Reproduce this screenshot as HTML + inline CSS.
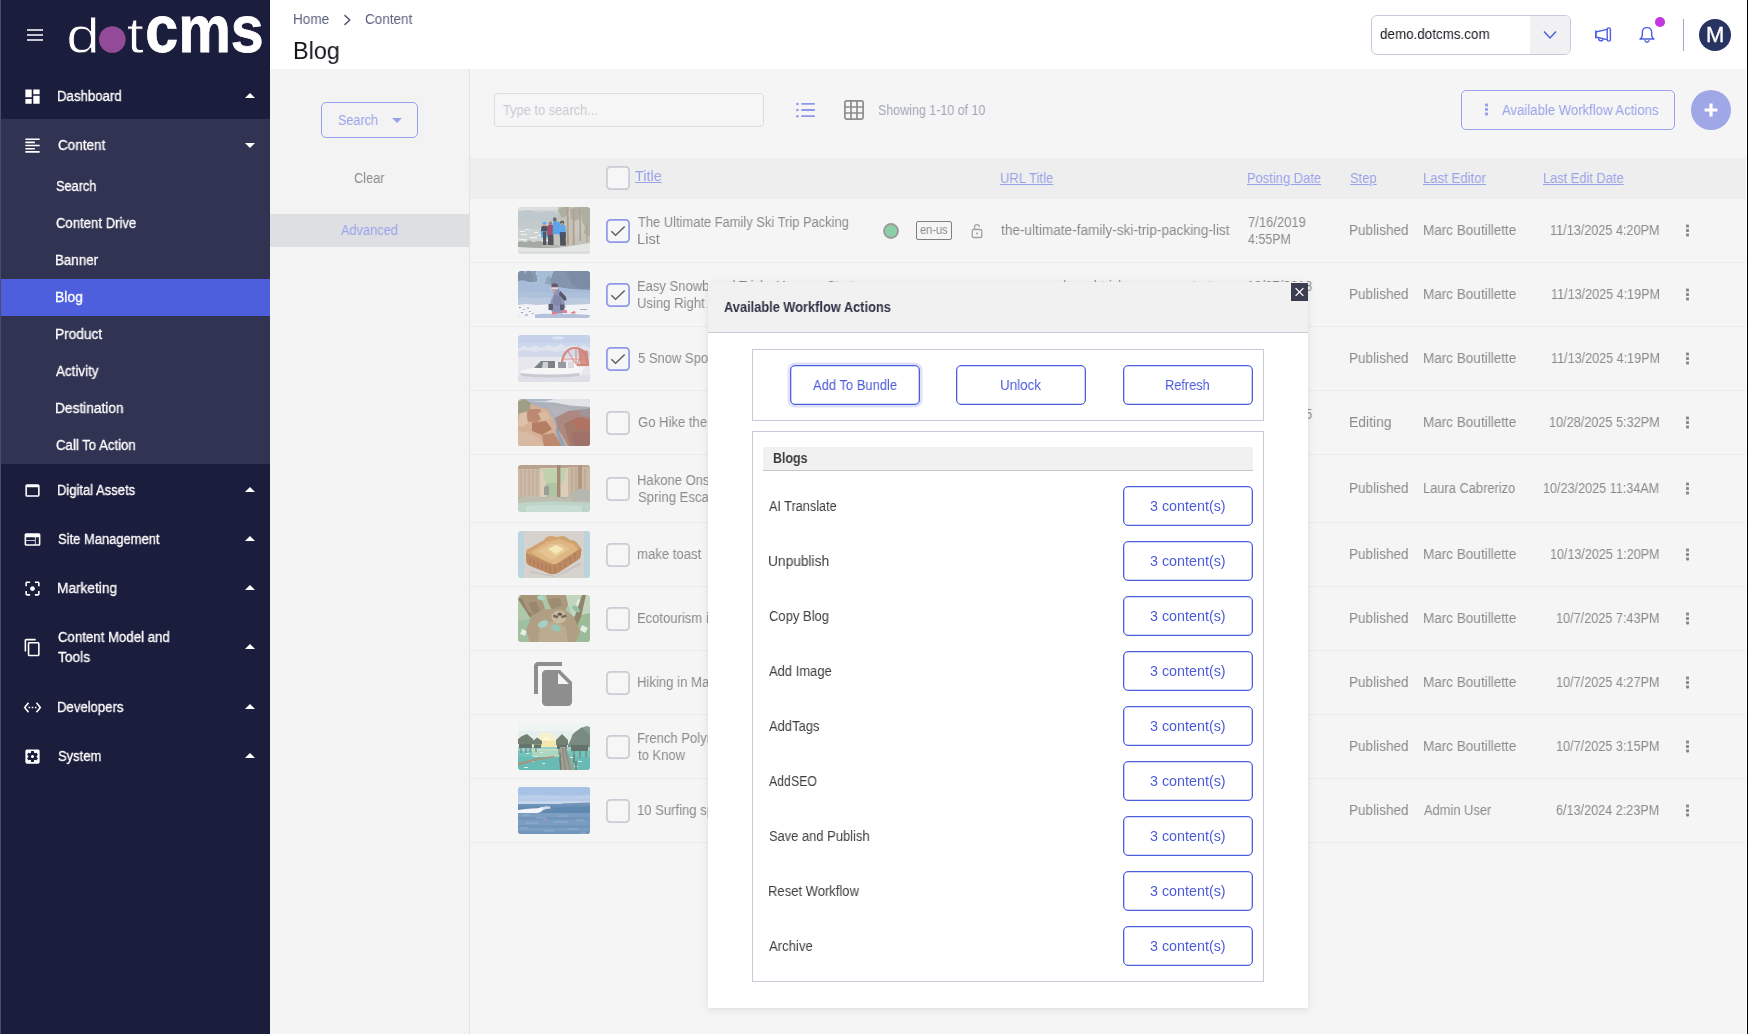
<!DOCTYPE html>
<html lang="en"><head><meta charset="utf-8"><title>dotCMS - Blog</title>
<style>
html,body{margin:0;padding:0;overflow:hidden}
body{position:relative;width:1748px;height:1034px;overflow:hidden;background:#fff;font-family:"Liberation Sans",sans-serif;font-size:14px}
.t{will-change:transform;position:absolute;white-space:nowrap;line-height:20px;transform-origin:0 50%;font-family:"Liberation Sans",sans-serif;display:block}
.ic{position:absolute;display:block;overflow:visible}
.side{position:absolute;left:0;top:0;width:270px;height:1034px;background:#1b1d3c;z-index:3}
.side .edge{position:absolute;left:0;top:0;width:1px;height:1034px;background:#4a4c68;z-index:2}
.side .sec{position:absolute;left:0;width:270px;background:#313352}
.side .act{position:absolute;left:0;width:270px;background:#4e5fde}
.top{position:absolute;left:0;top:0;width:1746px;height:69px;background:#fff;z-index:2}
.sel{position:absolute;left:1371px;top:15px;width:198px;height:38px;border:1px solid #c6c9dd;border-radius:6px;background:#fff;overflow:hidden}
.sel .trg{position:absolute;right:0;top:0;width:40px;height:38px;background:#f1f1f3}
.dot{position:absolute;left:1655px;top:17px;width:10px;height:10px;border-radius:50%;background:#c336e0}
.vdiv{position:absolute;left:1683px;top:19px;width:1px;height:32px;background:#a4a8bd}
.ava{position:absolute;left:1699px;top:19px;width:32px;height:32px;border-radius:50%;background:#273360}
.frame{position:absolute;left:0;top:0;width:1746px;height:1034px;background:#f5f5f5;z-index:1}
.panel{position:absolute;left:270px;top:69px;width:199px;height:965px;background:#f3f3f3;border-right:1px solid #e3e3e6}
.panel>*{margin-left:-270px;margin-top:-69px}
.sbtn{position:absolute;left:321px;top:102px;width:95px;height:34px;border:1px solid #99a2ec;border-radius:5px}
.adv{position:absolute;left:270px;top:214px;width:199px;height:33px;background:#dedfe3}
.inp{position:absolute;left:494px;top:93px;width:268px;height:32px;border:1px solid #dcdde4;border-radius:4px;background:#f6f6f6}
.awa{position:absolute;left:1461px;top:90px;width:212px;height:38px;border:1px solid #99a2ec;border-radius:5px}
.plus{position:absolute;left:1691px;top:90px;width:40px;height:40px;border-radius:50%;background:#9fa7e6}
.thead{position:absolute;left:470px;top:158px;width:1276px;height:41px;background:#eeeeee}
.row{position:absolute;left:470px;width:1276px;box-sizing:border-box;border-bottom:1px solid #ebebeb}
.lang{position:absolute;left:916px;width:34px;height:17px;border:1px solid #7e7e84;border-radius:2px}
.dlg{position:absolute;left:0;top:0;z-index:5}
.dshadow{position:absolute;left:708px;top:282px;width:600px;height:726px;box-shadow:0 2px 9px rgba(0,0,0,.09),0 0 2px rgba(0,0,0,.05)}
.dbody{position:absolute;left:708px;top:282px;width:600px;height:726px;background:#fff}
.dtitle{position:absolute;left:708px;top:282px;width:600px;height:50px;background:#f1f1f1;border-bottom:1px solid #c7c9d6}
.dclose{position:absolute;left:1291px;top:283px;width:17px;height:18px;background:#3b3e50}
.dclose svg{display:block}
.fs{position:absolute;border:1px solid #c9cbd9}
.btn{position:absolute;width:128px;height:38px;border:1px solid #4c60de;border-radius:5px;background:#fff;box-shadow:inset 0 0 0 .3px #4c60de}
.btn.foc{box-shadow:inset 0 0 0 .3px #4c60de,0 0 0 2.5px #dfe2f9}
.grp{position:absolute;left:763px;top:447px;width:490px;height:23px;background:#f1f1f1;border-bottom:1px solid #c3c5cf}
.redge{position:absolute;left:1747px;top:0;width:1px;height:1034px;background:#000;z-index:9}
.nv{-webkit-text-stroke:.3px #fff}

</style></head>
<body>
<nav class="side">
<div class="edge"></div>
<svg class="ic" style="left:27px;top:28px" width="16" height="14" viewBox="0 0 16 14"><path d="M0 2h16M0 7h16M0 12h16" stroke="#fff" stroke-width="1.4" fill="none"/></svg>
<svg class="ic logo" style="left:60px;top:8px" width="210" height="56" viewBox="60 8 210 56">
<text x="66.3" y="52.7" font-size="49.5" fill="#fff" stroke="#1b1d3c" stroke-width="0.9" textLength="33.6" lengthAdjust="spacingAndGlyphs">d</text>
<circle cx="112.3" cy="39.5" r="13.3" fill="#944b97"/>
<text x="126.6" y="52.7" font-size="49.5" fill="#fff" stroke="#1b1d3c" stroke-width="0.9" textLength="17.5" lengthAdjust="spacingAndGlyphs">t</text>
<text x="145.3" y="52.3" font-size="67" font-weight="700" fill="#fff" stroke="#fff" stroke-width="0.8" textLength="118.5" lengthAdjust="spacingAndGlyphs">cms</text>
</svg>
<div class="sec" style="top:119px;height:345px"></div>
<div class="act" style="top:279px;height:37px"></div>
<svg class="ic" style="left:23.10px;top:86.90px" width="19" height="19" viewBox="0 0 24 24"><path fill="#fff" d="M3 13h8V3H3v10zm0 8h8v-6H3v6zm10 0h8V11h-8v10zm0-18v6h8V3h-8z"/></svg>
<span class="t nv" style="left:57.32px;top:85.70px;font-size:14px;color:#fff;transform:scaleX(0.9437);">Dashboard</span>
<svg class="ic" style="left:245px;top:92.5px" width="10" height="5" viewBox="0 0 10 5"><path d="M0 5L5 0L10 5z" fill="#fff"/></svg>
<svg class="ic" style="left:23.10px;top:135.90px" width="19" height="19" viewBox="0 0 24 24"><path fill="#fff" d="M15 15H3v2h12v-2zm0-8H3v2h12V7zM3 13h18v-2H3v2zm0 8h18v-2H3v2zM3 3v2h18V3H3z"/></svg>
<span class="t nv" style="left:57.71px;top:134.70px;font-size:14px;color:#fff;transform:scaleX(0.9643);">Content</span>
<svg class="ic" style="left:245px;top:142.5px" width="10" height="5" viewBox="0 0 10 5"><path d="M0 0L5 5L10 0z" fill="#fff"/></svg>
<svg class="ic" style="left:23.10px;top:480.90px" width="19" height="19" viewBox="0 0 24 24"><path fill="#fff" d="M19 4H5c-1.11 0-2 .9-2 2v12c0 1.1.89 2 2 2h14c1.1 0 2-.9 2-2V6c0-1.1-.89-2-2-2zm0 14H5V8h14v10z"/></svg>
<span class="t nv" style="left:57.33px;top:479.70px;font-size:14px;color:#fff;transform:scaleX(0.9298);">Digital Assets</span>
<svg class="ic" style="left:245px;top:486.5px" width="10" height="5" viewBox="0 0 10 5"><path d="M0 5L5 0L10 5z" fill="#fff"/></svg>
<svg class="ic" style="left:23.10px;top:529.90px" width="19" height="19" viewBox="0 0 24 24"><path fill="#fff" d="M20 4H4c-1.1 0-1.99.9-1.99 2L2 18c0 1.1.9 2 2 2h16c1.1 0 2-.9 2-2V6c0-1.1-.9-2-2-2zm-5 14H4v-4h11v4zm0-5H4V9h11v4zm5 5h-4V9h4v9z"/></svg>
<span class="t nv" style="left:57.81px;top:528.70px;font-size:14px;color:#fff;transform:scaleX(0.9257);">Site Management</span>
<svg class="ic" style="left:245px;top:535.5px" width="10" height="5" viewBox="0 0 10 5"><path d="M0 5L5 0L10 5z" fill="#fff"/></svg>
<svg class="ic" style="left:23.10px;top:578.90px" width="19" height="19" viewBox="0 0 24 24"><path fill="#fff" d="M5 15H3v4c0 1.1.9 2 2 2h4v-2H5v-4zM5 5h4V3H5c-1.1 0-2 .9-2 2v4h2V5zm14-2h-4v2h4v4h2V5c0-1.1-.9-2-2-2zm0 16h-4v2h4c1.1 0 2-.9 2-2v-4h-2v4zM12 9c-1.66 0-3 1.34-3 3s1.34 3 3 3 3-1.34 3-3-1.34-3-3-3z"/></svg>
<span class="t nv" style="left:57.28px;top:577.70px;font-size:14px;color:#fff;transform:scaleX(0.9761);">Marketing</span>
<svg class="ic" style="left:245px;top:584.5px" width="10" height="5" viewBox="0 0 10 5"><path d="M0 5L5 0L10 5z" fill="#fff"/></svg>
<svg class="ic" style="left:23.10px;top:638.10px" width="19" height="19" viewBox="0 0 24 24"><path fill="#fff" d="M16 1H4c-1.1 0-2 .9-2 2v14h2V3h12V1zm3 4H8c-1.1 0-2 .9-2 2v14c0 1.1.9 2 2 2h11c1.1 0 2-.9 2-2V7c0-1.1-.9-2-2-2zm0 16H8V7h11v14z"/></svg>
<span class="t nv" style="left:57.73px;top:626.60px;font-size:14px;color:#fff;transform:scaleX(0.9444);">Content Model and</span>
<span class="t nv" style="left:58.09px;top:647.30px;font-size:14px;color:#fff;transform:scaleX(0.9823);">Tools</span>
<svg class="ic" style="left:245px;top:643.5px" width="10" height="5" viewBox="0 0 10 5"><path d="M0 5L5 0L10 5z" fill="#fff"/></svg>
<svg class="ic" style="left:23.10px;top:697.90px" width="19" height="19" viewBox="0 0 24 24"><path fill="#fff" d="M7.77 6.76L6.23 5.48.82 12l5.41 6.52 1.54-1.28L3.42 12l4.35-5.24zM7 13h2v-2H7v2zm10-2h-2v2h2v-2zm-6 2h2v-2h-2v2zm6.77-7.52l-1.54 1.28L20.58 12l-4.35 5.24 1.54 1.28L23.18 12l-5.41-6.52z"/></svg>
<span class="t nv" style="left:57.32px;top:696.70px;font-size:14px;color:#fff;transform:scaleX(0.9384);">Developers</span>
<svg class="ic" style="left:245px;top:703.5px" width="10" height="5" viewBox="0 0 10 5"><path d="M0 5L5 0L10 5z" fill="#fff"/></svg>
<svg class="ic" style="left:23.10px;top:746.90px" width="19" height="19" viewBox="0 0 24 24"><path fill="#fff" d="M12 10c-1.1 0-2 .9-2 2s.9 2 2 2 2-.9 2-2-.9-2-2-2zm7-7H5c-1.11 0-2 .9-2 2v14c0 1.1.89 2 2 2h14c1.11 0 2-.9 2-2V5c0-1.1-.89-2-2-2zm-1.75 9c0 .23-.02.46-.05.68l1.48 1.16c.13.11.17.3.08.45l-1.4 2.42c-.09.15-.27.21-.43.15l-1.74-.7c-.36.28-.76.51-1.18.69l-.26 1.85c-.03.17-.18.3-.35.3h-2.8c-.17 0-.32-.13-.35-.29l-.26-1.85c-.43-.18-.82-.41-1.18-.69l-1.74.7c-.16.06-.34 0-.43-.15l-1.4-2.42c-.09-.15-.05-.34.08-.45l1.48-1.16c-.03-.23-.05-.46-.05-.69 0-.23.02-.46.05-.68l-1.48-1.16c-.13-.11-.17-.3-.08-.45l1.4-2.42c.09-.15.27-.21.43-.15l1.74.7c.36-.28.76-.51 1.18-.69l.26-1.85c.03-.17.18-.3.35-.3h2.8c.17 0 .32.13.35.29l.26 1.85c.43.18.82.41 1.18.69l1.74-.7c.16-.06.34 0 .43.15l1.4 2.42c.09.15.05.34-.08.45l-1.48 1.16c.03.23.05.46.05.69z"/></svg>
<span class="t nv" style="left:57.81px;top:745.70px;font-size:14px;color:#fff;transform:scaleX(0.9287);">System</span>
<svg class="ic" style="left:245px;top:752.5px" width="10" height="5" viewBox="0 0 10 5"><path d="M0 5L5 0L10 5z" fill="#fff"/></svg>
<span class="t nv" style="left:55.62px;top:175.90px;font-size:14px;color:#fff;transform:scaleX(0.9109);">Search</span>
<span class="t nv" style="left:55.53px;top:212.90px;font-size:14px;color:#fff;transform:scaleX(0.9376);">Content Drive</span>
<span class="t nv" style="left:55.10px;top:249.90px;font-size:14px;color:#fff;transform:scaleX(0.9539);">Banner</span>
<span class="t nv" style="left:55.06px;top:286.90px;font-size:14px;color:#fff;transform:scaleX(0.9915);">Blog</span>
<span class="t nv" style="left:55.08px;top:323.90px;font-size:14px;color:#fff;transform:scaleX(0.9788);">Product</span>
<span class="t nv" style="left:56.17px;top:360.90px;font-size:14px;color:#fff;transform:scaleX(0.9597);">Activity</span>
<span class="t nv" style="left:55.08px;top:397.90px;font-size:14px;color:#fff;transform:scaleX(0.9782);">Destination</span>
<span class="t nv" style="left:55.53px;top:434.90px;font-size:14px;color:#fff;transform:scaleX(0.9427);">Call To Action</span>
</nav>
<header class="top">
<span class="t" style="left:293.19px;top:8.80px;font-size:14px;color:#5a5f7e;transform:scaleX(0.9698);">Home</span>
<svg class="ic" style="left:343px;top:14px" width="9" height="12" viewBox="0 0 9 12"><path d="M1.5 1.2L6.7 6L1.5 10.8" stroke="#5a5f7e" stroke-width="1.6" fill="none"/></svg>
<span class="t" style="left:364.61px;top:8.80px;font-size:14px;color:#5a5f7e;transform:scaleX(0.9643);">Content</span>
<span class="t" style="left:293.49px;top:35.80px;font-size:23.5px;color:#14151a;transform:scaleX(0.9932);line-height:30px;">Blog</span>
<div class="sel"><div class="trg"></div></div>
<span class="t" style="left:1379.64px;top:23.50px;font-size:14.5px;color:#17181d;transform:scaleX(0.9256);">demo.dotcms.com</span>
<svg class="ic" style="left:1543px;top:30px" width="14" height="10" viewBox="0 0 14 10"><path d="M1 1.6L7 8L13 1.6" stroke="#4c5fe0" stroke-width="1.5" fill="none"/></svg>
<svg class="ic" style="left:1594px;top:26px" width="18" height="18" viewBox="0 0 18 18" fill="none" stroke="#4c5fe0" stroke-width="1.4" stroke-linejoin="round" stroke-linecap="round">
<rect x="13.2" y="1.9" width="3.2" height="13.2" rx="1.4"/><path d="M13.2 3.4L1.8 6v5l11.4 2.6"/><path d="M1.8 5v7"/><path d="M4.6 12.2c0 1.6 .9 2.6 2.2 2.6s2.1-.8 2.1-1.6"/></svg>
<svg class="ic" style="left:1638px;top:26px" width="18" height="18" viewBox="0 0 18 18" fill="none" stroke="#4c5fe0" stroke-width="1.4" stroke-linejoin="round" stroke-linecap="round">
<path d="M9 1.6c-2.9 0-4.7 2.1-4.7 5v2.8c0 1.3-.9 2.5-2.3 3.6h14c-1.4-1.1-2.3-2.3-2.3-3.6V6.6c0-2.9-1.8-5-4.7-5z"/><path d="M7 14.6c.3 1 1 1.6 2 1.6s1.7-.6 2-1.6"/></svg>
<div class="dot"></div><div class="vdiv"></div><div class="ava"></div>
<span class="t" style="left:1705.90px;top:21.20px;font-size:21.5px;color:#fff;transform:scaleX(1.0220);line-height:28px;-webkit-text-stroke:.35px #fff;">M</span>
</header>
<section class="frame">
<aside class="panel">
<div class="sbtn"></div>
<span class="t" style="left:337.63px;top:109.50px;font-size:14px;color:#9aa2ea;transform:scaleX(0.9015);">Search</span>
<svg class="ic" style="left:392px;top:118px" width="10" height="5" viewBox="0 0 10 5"><path d="M0 0L5 5L10 0z" fill="#9aa2ea"/></svg>
<span class="t" style="left:354.15px;top:167.50px;font-size:14px;color:#8b8b8b;transform:scaleX(0.9135);">Clear</span>
<div class="adv"></div>
<span class="t" style="left:341.28px;top:219.50px;font-size:14px;color:#9aa2ea;transform:scaleX(0.9129);">Advanced</span>
</aside>
<main class="list">
<div class="inp"></div>
<span class="t" style="left:503.11px;top:99.90px;font-size:14px;color:#c9cad2;transform:scaleX(0.9175);">Type to search...</span>
<svg class="ic" style="left:796px;top:102px" width="20" height="16" viewBox="0 0 20 16"><g fill="#8e97ea"><circle cx="1.400" cy="1.900" r="1.250"/><circle cx="1.400" cy="8" r="1.250"/><circle cx="1.400" cy="14.200" r="1.250"/><rect x="5.2" y="1" width="13.8" height="1.800" rx=".7"/><rect x="5.2" y="7.100" width="13.8" height="1.800" rx=".7"/><rect x="5.2" y="13.300" width="13.8" height="1.800" rx=".7"/></g></svg>
<svg class="ic" style="left:844px;top:100px" width="20" height="20" viewBox="0 0 20 20"><g fill="none" stroke="#8c8c8c" stroke-width="1.7"><rect x="0.9" y="0.9" width="18.2" height="18.2" rx="1.6"/><path d="M7 1v18M13 1v18M1 7h18M1 13h18"/></g></svg>
<span class="t" style="left:878.03px;top:100.00px;font-size:14px;color:#a3a6b8;transform:scaleX(0.8907);">Showing 1-10 of 10</span>
<div class="awa"></div>
<svg class="ic" style="left:1483.6px;top:103.2px" width="5" height="13" viewBox="0 0 5 13"><g fill="#98a1ea"><rect x="1" y="0.6" width="3" height="3" rx=".7"/><rect x="1" y="5" width="3" height="3" rx=".7"/><rect x="1" y="9.4" width="3" height="3" rx=".7"/></g></svg>
<span class="t" style="left:1501.97px;top:99.50px;font-size:14px;color:#9aa2ea;transform:scaleX(0.9383);">Available Workflow Actions</span>
<div class="plus"><svg width="40" height="40" viewBox="0 0 40 40"><path d="M20 13.6v12.8M13.6 20h12.8" stroke="#fff" stroke-width="3.2"/></svg></div>
<div class="thead"></div>
<svg class="ic cb" style="left:606px;top:166px" width="24" height="24" viewBox="0 0 24 24"><rect x=".9" y=".9" width="22.2" height="22.2" rx="3.600" fill="#f6f6f6" stroke="#cacbd4" stroke-width="1.7"/></svg>
<span class="t" style="left:635.48px;top:165.80px;font-size:14px;color:#9aa2ea;text-decoration:underline;transform:scaleX(1.0283);">Title</span>
<span class="t" style="left:1000.29px;top:167.50px;font-size:14px;color:#9aa2ea;text-decoration:underline;transform:scaleX(0.9340);">URL Title</span>
<span class="t" style="left:1247.24px;top:167.50px;font-size:14px;color:#9aa2ea;text-decoration:underline;transform:scaleX(0.9249);">Posting Date</span>
<span class="t" style="left:1349.91px;top:167.50px;font-size:14px;color:#9aa2ea;text-decoration:underline;transform:scaleX(0.9247);">Step</span>
<span class="t" style="left:1423.22px;top:167.50px;font-size:14px;color:#9aa2ea;text-decoration:underline;transform:scaleX(0.9413);">Last Editor</span>
<span class="t" style="left:1543.45px;top:167.50px;font-size:14px;color:#9aa2ea;text-decoration:underline;transform:scaleX(0.9168);">Last Edit Date</span>
<div class="row" style="top:199px;height:64px"></div>
<svg class="ic cb" style="left:606px;top:219.0px" width="24" height="24" viewBox="0 0 24 24"><rect x=".9" y=".9" width="22.2" height="22.2" rx="3.600" fill="#f6f6f6" stroke="#8f98e8" stroke-width="1.7"/></svg>
<svg class="ic" style="left:606px;top:219.0px" width="24" height="24" viewBox="0 0 24 24"><path d="M5.300 12.300L9.600 16.300L18.700 7.500" stroke="#5e5e5e" stroke-width="1.4" fill="none"/></svg>
<span class="t" style="left:638.01px;top:211.90px;font-size:14px;color:#8b8b8b;transform:scaleX(0.9217);">The Ultimate Family Ski Trip Packing</span>
<span class="t" style="left:637.10px;top:228.60px;font-size:14px;color:#8b8b8b;transform:scaleX(1.0470);">List</span>
<span class="t" style="left:1001.09px;top:220.00px;font-size:14px;color:#8b8b8b;transform:scaleX(0.9726);">the-ultimate-family-ski-trip-packing-list</span>
<span class="t" style="left:1247.53px;top:211.80px;font-size:14px;color:#8b8b8b;transform:scaleX(0.9277);">7/16/2019</span>
<span class="t" style="left:1247.91px;top:228.60px;font-size:14px;color:#8b8b8b;transform:scaleX(0.8871);">4:55PM</span>
<span class="t" style="left:1349.39px;top:220.00px;font-size:14px;color:#8b8b8b;transform:scaleX(0.9673);">Published</span>
<span class="t" style="left:1423.39px;top:220.00px;font-size:14px;color:#8b8b8b;transform:scaleX(0.9661);">Marc Boutillette</span>
<span class="t" style="left:1550.04px;top:220.00px;font-size:14px;color:#8b8b8b;transform:scaleX(0.9037);">11/13/2025 4:20PM</span>
<svg class="ic" style="left:1684.6px;top:223.8px" width="5" height="13" viewBox="0 0 5 13"><g fill="#8a8a8a"><rect x="1" y="0.6" width="3" height="3" rx=".7"/><rect x="1" y="5" width="3" height="3" rx=".7"/><rect x="1" y="9.4" width="3" height="3" rx=".7"/></g></svg>
<svg class="ic" style="left:883px;top:223.0px" width="16" height="16" viewBox="0 0 16 16"><circle cx="8" cy="8" r="7" fill="#8acfa8" stroke="#9c9999" stroke-width="1.8"/></svg>
<div class="lang" style="top:221.0px"></div>
<span class="t" style="left:920.13px;top:219.50px;font-size:12.3px;color:#8a8a90;transform:scaleX(0.8993);">en-us</span>
<svg class="ic" style="left:970px;top:223.0px" width="14" height="16" viewBox="0 0 14 16"><g fill="none" stroke="#a2a2a2" stroke-width="1.300"><rect x="2.250" y="6.500" width="9.500" height="8" rx="1.200"/><path d="M4.500 6.500V4.300a2.500 2.500 0 0 1 5 -.300"/></g><circle cx="7" cy="10.500" r="1.050" fill="#a2a2a2"/></svg>
<div class="row" style="top:263px;height:64px"></div>
<svg class="ic cb" style="left:606px;top:283.0px" width="24" height="24" viewBox="0 0 24 24"><rect x=".9" y=".9" width="22.2" height="22.2" rx="3.600" fill="#f6f6f6" stroke="#8f98e8" stroke-width="1.7"/></svg>
<svg class="ic" style="left:606px;top:283.0px" width="24" height="24" viewBox="0 0 24 24"><path d="M5.300 12.300L9.600 16.300L18.700 7.500" stroke="#5e5e5e" stroke-width="1.4" fill="none"/></svg>
<span class="t" style="left:637.23px;top:275.90px;font-size:14px;color:#8b8b8b;transform:scaleX(0.9300);">Easy Snowboard Tricks You can Start</span>
<span class="t" style="left:637.29px;top:292.60px;font-size:14px;color:#8b8b8b;transform:scaleX(0.9345);">Using Right Away</span>
<span class="t" style="left:1000.75px;top:275.80px;font-size:14px;color:#8b8b8b;transform:scaleX(0.9299);">easy-snowboard-tricks-you-can-start-</span>
<span class="t" style="left:1000.45px;top:292.60px;font-size:14px;color:#8b8b8b;transform:scaleX(0.9335);">using-right-away</span>
<span class="t" style="left:1247.21px;top:275.80px;font-size:14px;color:#8b8b8b;transform:scaleX(0.9314);">12/27/2018</span>
<span class="t" style="left:1247.72px;top:292.60px;font-size:14px;color:#8b8b8b;transform:scaleX(0.8912);">3:12PM</span>
<span class="t" style="left:1349.39px;top:284.00px;font-size:14px;color:#8b8b8b;transform:scaleX(0.9673);">Published</span>
<span class="t" style="left:1423.39px;top:284.00px;font-size:14px;color:#8b8b8b;transform:scaleX(0.9661);">Marc Boutillette</span>
<span class="t" style="left:1550.54px;top:284.00px;font-size:14px;color:#8b8b8b;transform:scaleX(0.8995);">11/13/2025 4:19PM</span>
<svg class="ic" style="left:1684.6px;top:287.8px" width="5" height="13" viewBox="0 0 5 13"><g fill="#8a8a8a"><rect x="1" y="0.6" width="3" height="3" rx=".7"/><rect x="1" y="5" width="3" height="3" rx=".7"/><rect x="1" y="9.4" width="3" height="3" rx=".7"/></g></svg>
<svg class="ic" style="left:883px;top:287.0px" width="16" height="16" viewBox="0 0 16 16"><circle cx="8" cy="8" r="7" fill="#8acfa8" stroke="#9c9999" stroke-width="1.8"/></svg>
<div class="lang" style="top:285.0px"></div>
<span class="t" style="left:920.13px;top:283.50px;font-size:12.3px;color:#8a8a90;transform:scaleX(0.8993);">en-us</span>
<svg class="ic" style="left:970px;top:287.0px" width="14" height="16" viewBox="0 0 14 16"><g fill="none" stroke="#a2a2a2" stroke-width="1.300"><rect x="2.250" y="6.500" width="9.500" height="8" rx="1.200"/><path d="M4.500 6.500V4.300a2.500 2.500 0 0 1 5 -.300"/></g><circle cx="7" cy="10.500" r="1.050" fill="#a2a2a2"/></svg>
<div class="row" style="top:327px;height:64px"></div>
<svg class="ic cb" style="left:606px;top:347.0px" width="24" height="24" viewBox="0 0 24 24"><rect x=".9" y=".9" width="22.2" height="22.2" rx="3.600" fill="#f6f6f6" stroke="#8f98e8" stroke-width="1.7"/></svg>
<svg class="ic" style="left:606px;top:347.0px" width="24" height="24" viewBox="0 0 24 24"><path d="M5.300 12.300L9.600 16.300L18.700 7.500" stroke="#5e5e5e" stroke-width="1.4" fill="none"/></svg>
<span class="t" style="left:637.78px;top:347.70px;font-size:14px;color:#8b8b8b;transform:scaleX(0.9286);">5 Snow Sports to Try This Winter</span>
<span class="t" style="left:1000.78px;top:348.00px;font-size:14px;color:#8b8b8b;transform:scaleX(0.9288);">5-snow-sports-to-try-this-winter</span>
<span class="t" style="left:1247.20px;top:339.80px;font-size:14px;color:#8b8b8b;transform:scaleX(0.9330);">1/10/2019</span>
<span class="t" style="left:1247.57px;top:356.60px;font-size:14px;color:#8b8b8b;transform:scaleX(0.8945);">2:30PM</span>
<span class="t" style="left:1349.39px;top:348.00px;font-size:14px;color:#8b8b8b;transform:scaleX(0.9673);">Published</span>
<span class="t" style="left:1423.39px;top:348.00px;font-size:14px;color:#8b8b8b;transform:scaleX(0.9661);">Marc Boutillette</span>
<span class="t" style="left:1550.54px;top:348.00px;font-size:14px;color:#8b8b8b;transform:scaleX(0.8995);">11/13/2025 4:19PM</span>
<svg class="ic" style="left:1684.6px;top:351.8px" width="5" height="13" viewBox="0 0 5 13"><g fill="#8a8a8a"><rect x="1" y="0.6" width="3" height="3" rx=".7"/><rect x="1" y="5" width="3" height="3" rx=".7"/><rect x="1" y="9.4" width="3" height="3" rx=".7"/></g></svg>
<svg class="ic" style="left:883px;top:351.0px" width="16" height="16" viewBox="0 0 16 16"><circle cx="8" cy="8" r="7" fill="#8acfa8" stroke="#9c9999" stroke-width="1.8"/></svg>
<div class="lang" style="top:349.0px"></div>
<span class="t" style="left:920.13px;top:347.50px;font-size:12.3px;color:#8a8a90;transform:scaleX(0.8993);">en-us</span>
<svg class="ic" style="left:970px;top:351.0px" width="14" height="16" viewBox="0 0 14 16"><g fill="none" stroke="#a2a2a2" stroke-width="1.300"><rect x="2.250" y="6.500" width="9.500" height="8" rx="1.200"/><path d="M4.500 6.500V4.300a2.500 2.500 0 0 1 5 -.300"/></g><circle cx="7" cy="10.500" r="1.050" fill="#a2a2a2"/></svg>
<div class="row" style="top:391px;height:64px"></div>
<svg class="ic cb" style="left:606px;top:411.0px" width="24" height="24" viewBox="0 0 24 24"><rect x=".9" y=".9" width="22.2" height="22.2" rx="3.600" fill="#f6f6f6" stroke="#cacbd4" stroke-width="1.7"/></svg>
<span class="t" style="left:637.64px;top:411.70px;font-size:14px;color:#8b8b8b;transform:scaleX(0.9339);">Go Hike the Grand Canyon</span>
<span class="t" style="left:1000.75px;top:412.00px;font-size:14px;color:#8b8b8b;transform:scaleX(0.9337);">go-hike-the-grand-canyon</span>
<span class="t" style="left:1247.21px;top:403.80px;font-size:14px;color:#8b8b8b;transform:scaleX(0.9311);">10/28/2025</span>
<span class="t" style="left:1247.70px;top:420.60px;font-size:14px;color:#8b8b8b;transform:scaleX(0.8917);">5:32PM</span>
<span class="t" style="left:1349.36px;top:412.00px;font-size:14px;color:#8b8b8b;transform:scaleX(0.9937);">Editing</span>
<span class="t" style="left:1423.39px;top:412.00px;font-size:14px;color:#8b8b8b;transform:scaleX(0.9661);">Marc Boutillette</span>
<span class="t" style="left:1548.83px;top:412.00px;font-size:14px;color:#8b8b8b;transform:scaleX(0.9059);">10/28/2025 5:32PM</span>
<svg class="ic" style="left:1684.6px;top:415.8px" width="5" height="13" viewBox="0 0 5 13"><g fill="#8a8a8a"><rect x="1" y="0.6" width="3" height="3" rx=".7"/><rect x="1" y="5" width="3" height="3" rx=".7"/><rect x="1" y="9.4" width="3" height="3" rx=".7"/></g></svg>
<svg class="ic" style="left:883px;top:415.0px" width="16" height="16" viewBox="0 0 16 16"><circle cx="8" cy="8" r="7" fill="#8acfa8" stroke="#9c9999" stroke-width="1.8"/></svg>
<div class="lang" style="top:413.0px"></div>
<span class="t" style="left:920.13px;top:411.50px;font-size:12.3px;color:#8a8a90;transform:scaleX(0.8993);">en-us</span>
<svg class="ic" style="left:970px;top:415.0px" width="14" height="16" viewBox="0 0 14 16"><g fill="none" stroke="#a2a2a2" stroke-width="1.300"><rect x="2.250" y="6.500" width="9.500" height="8" rx="1.200"/><path d="M4.500 6.500V4.300a2.500 2.500 0 0 1 5 -.300"/></g><circle cx="7" cy="10.500" r="1.050" fill="#a2a2a2"/></svg>
<div class="row" style="top:455px;height:68px"></div>
<svg class="ic cb" style="left:606px;top:477.0px" width="24" height="24" viewBox="0 0 24 24"><rect x=".9" y=".9" width="22.2" height="22.2" rx="3.600" fill="#f6f6f6" stroke="#cacbd4" stroke-width="1.7"/></svg>
<span class="t" style="left:637.23px;top:469.90px;font-size:14px;color:#8b8b8b;transform:scaleX(0.9308);">Hakone Onsen: A Japanese Hot</span>
<span class="t" style="left:637.70px;top:486.60px;font-size:14px;color:#8b8b8b;transform:scaleX(0.9380);">Spring Escape</span>
<span class="t" style="left:1000.40px;top:478.00px;font-size:14px;color:#8b8b8b;transform:scaleX(0.9303);">hakone-onsen-a-japanese-hot-spring-escape</span>
<span class="t" style="left:1247.90px;top:469.80px;font-size:14px;color:#8b8b8b;transform:scaleX(0.9206);">4/23/2025</span>
<span class="t" style="left:1247.23px;top:486.60px;font-size:14px;color:#8b8b8b;transform:scaleX(0.9094);">11:34AM</span>
<span class="t" style="left:1349.39px;top:478.00px;font-size:14px;color:#8b8b8b;transform:scaleX(0.9673);">Published</span>
<span class="t" style="left:1423.44px;top:478.00px;font-size:14px;color:#8b8b8b;transform:scaleX(0.9194);">Laura Cabrerizo</span>
<span class="t" style="left:1543.34px;top:478.00px;font-size:14px;color:#8b8b8b;transform:scaleX(0.9010);">10/23/2025 11:34AM</span>
<svg class="ic" style="left:1684.6px;top:481.8px" width="5" height="13" viewBox="0 0 5 13"><g fill="#8a8a8a"><rect x="1" y="0.6" width="3" height="3" rx=".7"/><rect x="1" y="5" width="3" height="3" rx=".7"/><rect x="1" y="9.4" width="3" height="3" rx=".7"/></g></svg>
<svg class="ic" style="left:883px;top:481.0px" width="16" height="16" viewBox="0 0 16 16"><circle cx="8" cy="8" r="7" fill="#8acfa8" stroke="#9c9999" stroke-width="1.8"/></svg>
<div class="lang" style="top:479.0px"></div>
<span class="t" style="left:920.13px;top:477.50px;font-size:12.3px;color:#8a8a90;transform:scaleX(0.8993);">en-us</span>
<svg class="ic" style="left:970px;top:481.0px" width="14" height="16" viewBox="0 0 14 16"><g fill="none" stroke="#a2a2a2" stroke-width="1.300"><rect x="2.250" y="6.500" width="9.500" height="8" rx="1.200"/><path d="M4.500 6.500V4.300a2.500 2.500 0 0 1 5 -.300"/></g><circle cx="7" cy="10.500" r="1.050" fill="#a2a2a2"/></svg>
<div class="row" style="top:523px;height:64px"></div>
<svg class="ic cb" style="left:606px;top:543.0px" width="24" height="24" viewBox="0 0 24 24"><rect x=".9" y=".9" width="22.2" height="22.2" rx="3.600" fill="#f6f6f6" stroke="#cacbd4" stroke-width="1.7"/></svg>
<span class="t" style="left:637.43px;top:543.70px;font-size:14px;color:#8b8b8b;transform:scaleX(0.9392);">make toast</span>
<span class="t" style="left:1000.43px;top:544.00px;font-size:14px;color:#8b8b8b;transform:scaleX(0.9390);">make-toast</span>
<span class="t" style="left:1247.59px;top:535.80px;font-size:14px;color:#8b8b8b;transform:scaleX(0.9256);">9/13/2025</span>
<span class="t" style="left:1247.24px;top:552.60px;font-size:14px;color:#8b8b8b;transform:scaleX(0.9015);">1:20PM</span>
<span class="t" style="left:1349.39px;top:544.00px;font-size:14px;color:#8b8b8b;transform:scaleX(0.9673);">Published</span>
<span class="t" style="left:1423.39px;top:544.00px;font-size:14px;color:#8b8b8b;transform:scaleX(0.9661);">Marc Boutillette</span>
<span class="t" style="left:1550.04px;top:544.00px;font-size:14px;color:#8b8b8b;transform:scaleX(0.8959);">10/13/2025 1:20PM</span>
<svg class="ic" style="left:1684.6px;top:547.8px" width="5" height="13" viewBox="0 0 5 13"><g fill="#8a8a8a"><rect x="1" y="0.6" width="3" height="3" rx=".7"/><rect x="1" y="5" width="3" height="3" rx=".7"/><rect x="1" y="9.4" width="3" height="3" rx=".7"/></g></svg>
<svg class="ic" style="left:883px;top:547.0px" width="16" height="16" viewBox="0 0 16 16"><circle cx="8" cy="8" r="7" fill="#8acfa8" stroke="#9c9999" stroke-width="1.8"/></svg>
<div class="lang" style="top:545.0px"></div>
<span class="t" style="left:920.13px;top:543.50px;font-size:12.3px;color:#8a8a90;transform:scaleX(0.8993);">en-us</span>
<svg class="ic" style="left:970px;top:547.0px" width="14" height="16" viewBox="0 0 14 16"><g fill="none" stroke="#a2a2a2" stroke-width="1.300"><rect x="2.250" y="6.500" width="9.500" height="8" rx="1.200"/><path d="M4.500 6.500V4.300a2.500 2.500 0 0 1 5 -.300"/></g><circle cx="7" cy="10.500" r="1.050" fill="#a2a2a2"/></svg>
<div class="row" style="top:587px;height:64px"></div>
<svg class="ic cb" style="left:606px;top:607.0px" width="24" height="24" viewBox="0 0 24 24"><rect x=".9" y=".9" width="22.2" height="22.2" rx="3.600" fill="#f6f6f6" stroke="#cacbd4" stroke-width="1.7"/></svg>
<span class="t" style="left:637.23px;top:607.70px;font-size:14px;color:#8b8b8b;transform:scaleX(0.9318);">Ecotourism in Costa Rica</span>
<span class="t" style="left:1000.75px;top:608.00px;font-size:14px;color:#8b8b8b;transform:scaleX(0.9287);">ecotourism-in-costa-rica</span>
<span class="t" style="left:1247.71px;top:599.80px;font-size:14px;color:#8b8b8b;transform:scaleX(0.9249);">3/22/2019</span>
<span class="t" style="left:1247.61px;top:616.60px;font-size:14px;color:#8b8b8b;transform:scaleX(0.8935);">9:06AM</span>
<span class="t" style="left:1349.39px;top:608.00px;font-size:14px;color:#8b8b8b;transform:scaleX(0.9673);">Published</span>
<span class="t" style="left:1423.39px;top:608.00px;font-size:14px;color:#8b8b8b;transform:scaleX(0.9661);">Marc Boutillette</span>
<span class="t" style="left:1556.04px;top:608.00px;font-size:14px;color:#8b8b8b;transform:scaleX(0.9046);">10/7/2025 7:43PM</span>
<svg class="ic" style="left:1684.6px;top:611.8px" width="5" height="13" viewBox="0 0 5 13"><g fill="#8a8a8a"><rect x="1" y="0.6" width="3" height="3" rx=".7"/><rect x="1" y="5" width="3" height="3" rx=".7"/><rect x="1" y="9.4" width="3" height="3" rx=".7"/></g></svg>
<svg class="ic" style="left:883px;top:611.0px" width="16" height="16" viewBox="0 0 16 16"><circle cx="8" cy="8" r="7" fill="#8acfa8" stroke="#9c9999" stroke-width="1.8"/></svg>
<div class="lang" style="top:609.0px"></div>
<span class="t" style="left:920.13px;top:607.50px;font-size:12.3px;color:#8a8a90;transform:scaleX(0.8993);">en-us</span>
<svg class="ic" style="left:970px;top:611.0px" width="14" height="16" viewBox="0 0 14 16"><g fill="none" stroke="#a2a2a2" stroke-width="1.300"><rect x="2.250" y="6.500" width="9.500" height="8" rx="1.200"/><path d="M4.500 6.500V4.300a2.500 2.500 0 0 1 5 -.300"/></g><circle cx="7" cy="10.500" r="1.050" fill="#a2a2a2"/></svg>
<div class="row" style="top:651px;height:64px"></div>
<svg class="ic cb" style="left:606px;top:671.0px" width="24" height="24" viewBox="0 0 24 24"><rect x=".9" y=".9" width="22.2" height="22.2" rx="3.600" fill="#f6f6f6" stroke="#cacbd4" stroke-width="1.7"/></svg>
<span class="t" style="left:637.22px;top:671.70px;font-size:14px;color:#8b8b8b;transform:scaleX(0.9384);">Hiking in Machu Picchu</span>
<span class="t" style="left:1000.39px;top:672.00px;font-size:14px;color:#8b8b8b;transform:scaleX(0.9374);">hiking-in-machu-picchu</span>
<span class="t" style="left:1247.21px;top:663.80px;font-size:14px;color:#8b8b8b;transform:scaleX(0.9319);">10/7/2025</span>
<span class="t" style="left:1247.91px;top:680.60px;font-size:14px;color:#8b8b8b;transform:scaleX(0.8871);">4:27PM</span>
<span class="t" style="left:1349.39px;top:672.00px;font-size:14px;color:#8b8b8b;transform:scaleX(0.9673);">Published</span>
<span class="t" style="left:1423.39px;top:672.00px;font-size:14px;color:#8b8b8b;transform:scaleX(0.9661);">Marc Boutillette</span>
<span class="t" style="left:1556.04px;top:672.00px;font-size:14px;color:#8b8b8b;transform:scaleX(0.9046);">10/7/2025 4:27PM</span>
<svg class="ic" style="left:1684.6px;top:675.8px" width="5" height="13" viewBox="0 0 5 13"><g fill="#8a8a8a"><rect x="1" y="0.6" width="3" height="3" rx=".7"/><rect x="1" y="5" width="3" height="3" rx=".7"/><rect x="1" y="9.4" width="3" height="3" rx=".7"/></g></svg>
<svg class="ic" style="left:883px;top:675.0px" width="16" height="16" viewBox="0 0 16 16"><circle cx="8" cy="8" r="7" fill="#8acfa8" stroke="#9c9999" stroke-width="1.8"/></svg>
<div class="lang" style="top:673.0px"></div>
<span class="t" style="left:920.13px;top:671.50px;font-size:12.3px;color:#8a8a90;transform:scaleX(0.8993);">en-us</span>
<svg class="ic" style="left:970px;top:675.0px" width="14" height="16" viewBox="0 0 14 16"><g fill="none" stroke="#a2a2a2" stroke-width="1.300"><rect x="2.250" y="6.500" width="9.500" height="8" rx="1.200"/><path d="M4.500 6.500V4.300a2.500 2.500 0 0 1 5 -.300"/></g><circle cx="7" cy="10.500" r="1.050" fill="#a2a2a2"/></svg>
<div class="row" style="top:715px;height:64px"></div>
<svg class="ic cb" style="left:606px;top:735.0px" width="24" height="24" viewBox="0 0 24 24"><rect x=".9" y=".9" width="22.2" height="22.2" rx="3.600" fill="#f6f6f6" stroke="#cacbd4" stroke-width="1.7"/></svg>
<span class="t" style="left:637.23px;top:727.90px;font-size:14px;color:#8b8b8b;transform:scaleX(0.9329);">French Polynesia Everything You Need</span>
<span class="t" style="left:638.10px;top:744.60px;font-size:14px;color:#8b8b8b;transform:scaleX(0.9283);">to Know</span>
<span class="t" style="left:1001.12px;top:727.80px;font-size:14px;color:#8b8b8b;transform:scaleX(0.9282);">french-polynesia-everything-you-need-</span>
<span class="t" style="left:1001.10px;top:744.60px;font-size:14px;color:#8b8b8b;transform:scaleX(0.9284);">to-know</span>
<span class="t" style="left:1247.20px;top:727.80px;font-size:14px;color:#8b8b8b;transform:scaleX(0.9330);">12/5/2019</span>
<span class="t" style="left:1247.91px;top:744.60px;font-size:14px;color:#8b8b8b;transform:scaleX(0.8871);">4:41PM</span>
<span class="t" style="left:1349.39px;top:736.00px;font-size:14px;color:#8b8b8b;transform:scaleX(0.9673);">Published</span>
<span class="t" style="left:1423.39px;top:736.00px;font-size:14px;color:#8b8b8b;transform:scaleX(0.9661);">Marc Boutillette</span>
<span class="t" style="left:1556.04px;top:736.00px;font-size:14px;color:#8b8b8b;transform:scaleX(0.9046);">10/7/2025 3:15PM</span>
<svg class="ic" style="left:1684.6px;top:739.8px" width="5" height="13" viewBox="0 0 5 13"><g fill="#8a8a8a"><rect x="1" y="0.6" width="3" height="3" rx=".7"/><rect x="1" y="5" width="3" height="3" rx=".7"/><rect x="1" y="9.4" width="3" height="3" rx=".7"/></g></svg>
<svg class="ic" style="left:883px;top:739.0px" width="16" height="16" viewBox="0 0 16 16"><circle cx="8" cy="8" r="7" fill="#8acfa8" stroke="#9c9999" stroke-width="1.8"/></svg>
<div class="lang" style="top:737.0px"></div>
<span class="t" style="left:920.13px;top:735.50px;font-size:12.3px;color:#8a8a90;transform:scaleX(0.8993);">en-us</span>
<svg class="ic" style="left:970px;top:739.0px" width="14" height="16" viewBox="0 0 14 16"><g fill="none" stroke="#a2a2a2" stroke-width="1.300"><rect x="2.250" y="6.500" width="9.500" height="8" rx="1.200"/><path d="M4.500 6.500V4.300a2.500 2.500 0 0 1 5 -.300"/></g><circle cx="7" cy="10.500" r="1.050" fill="#a2a2a2"/></svg>
<div class="row" style="top:779px;height:64px"></div>
<svg class="ic cb" style="left:606px;top:799.0px" width="24" height="24" viewBox="0 0 24 24"><rect x=".9" y=".9" width="22.2" height="22.2" rx="3.600" fill="#f6f6f6" stroke="#cacbd4" stroke-width="1.7"/></svg>
<span class="t" style="left:637.31px;top:799.70px;font-size:14px;color:#8b8b8b;transform:scaleX(0.9328);">10 Surfing spots for Beginners</span>
<span class="t" style="left:1000.31px;top:800.00px;font-size:14px;color:#8b8b8b;transform:scaleX(0.9328);">10-surfing-spots-for-beginners</span>
<span class="t" style="left:1247.54px;top:791.80px;font-size:14px;color:#8b8b8b;transform:scaleX(0.9238);">6/13/2024</span>
<span class="t" style="left:1247.57px;top:808.60px;font-size:14px;color:#8b8b8b;transform:scaleX(0.8945);">2:23PM</span>
<span class="t" style="left:1349.39px;top:800.00px;font-size:14px;color:#8b8b8b;transform:scaleX(0.9673);">Published</span>
<span class="t" style="left:1424.47px;top:800.00px;font-size:14px;color:#8b8b8b;transform:scaleX(0.9194);">Admin User</span>
<span class="t" style="left:1556.36px;top:800.00px;font-size:14px;color:#8b8b8b;transform:scaleX(0.9017);">6/13/2024 2:23PM</span>
<svg class="ic" style="left:1684.6px;top:803.8px" width="5" height="13" viewBox="0 0 5 13"><g fill="#8a8a8a"><rect x="1" y="0.6" width="3" height="3" rx=".7"/><rect x="1" y="5" width="3" height="3" rx=".7"/><rect x="1" y="9.4" width="3" height="3" rx=".7"/></g></svg>
<svg class="ic" style="left:883px;top:803.0px" width="16" height="16" viewBox="0 0 16 16"><circle cx="8" cy="8" r="7" fill="#8acfa8" stroke="#9c9999" stroke-width="1.8"/></svg>
<div class="lang" style="top:801.0px"></div>
<span class="t" style="left:920.13px;top:799.50px;font-size:12.3px;color:#8a8a90;transform:scaleX(0.8993);">en-us</span>
<svg class="ic" style="left:970px;top:803.0px" width="14" height="16" viewBox="0 0 14 16"><g fill="none" stroke="#a2a2a2" stroke-width="1.300"><rect x="2.250" y="6.500" width="9.500" height="8" rx="1.200"/><path d="M4.500 6.500V4.300a2.500 2.500 0 0 1 5 -.300"/></g><circle cx="7" cy="10.500" r="1.050" fill="#a2a2a2"/></svg>
<svg class="ic th" style="left:518px;top:207px" width="72" height="47" viewBox="0 0 72 47"><defs><clipPath id="c1"><rect width="72" height="47" rx="3.5"/></clipPath></defs><g clip-path="url(#c1)"><rect width="72" height="47" fill="#c7ced2"/><rect width="72" height="3.500" fill="#dcdfde"/>
<path d="M0 5l10-2 12 3 10-2 10 4v14H0z" fill="#bfc8cd"/><path d="M0 14l14-2 12 3 16-2v10H0z" fill="#c3cacd"/>
<path d="M0 22h44v14H0z" fill="#cdd2d3"/><path d="M2 24h5v1H2zM8 22h3v1H8zM3 27h6v1H3zM12 30h7v1.200h-7zM1 32h8v1.300H1zM16 25h4v1h-4zM20 28h5v1h-5zM6 34h10v1.400H6zM24 33h6v1.200h-6z" fill="#f1f3f3"/>
<path d="M0 35l4-1 3 1 4-1.500 5 1.500 4-1 6 1 8-.5 8 .5v6H0z" fill="#a4aaa3"/>
<path d="M40 0h32v39H40z" fill="#c1c3b9"/><path d="M40 3l5-3h6l-2 8-5 3zM52 2l8-2 4 6-5 9-6-3zM63 0h9v30l-6-4-2-14z" fill="#adb0a0"/><path d="M44 12l6 2 3 10-5 8-5-3zM56 14l6-2 5 8-3 12-7-4z" fill="#c5c8c0"/>
<path d="M48.700 0h1.700l.6 38h-2.300zM54.800 2h1.400l.5 36h-2zM61.400 0h1.300l.5 34h-1.800zM68.300 18h1.300v17h-1.300z" fill="#b79c8c"/>
<path d="M0 40q22 1.500 44 .5l28-4.500v11H0z" fill="#e4e5e5"/><path d="M0 44h72v3H0z" fill="#dcdddd"/>
<path d="M23.500 19.500q3-1.500 6 0l.7 5h-7.400z" fill="#4d5466"/><path d="M22.800 24h2.600l.6 6.500h-2.600zM27.600 24h2.600l.2 6.500h-2.600z" fill="#58a8ee"/><path d="M25 24.500h3l.3 13.500H25z" fill="#55575e"/><ellipse cx="26.400" cy="16.300" rx="2" ry="1.500" fill="#5fb0ea"/><ellipse cx="26.400" cy="18.200" rx="1.500" ry="1" fill="#e98a6a"/>
<path d="M29.500 18.500q3.200-2 6.300 0l.6 9.500h-7.500z" fill="#a24f6c"/><path d="M30 28h6v10h-6z" fill="#54555b"/><circle cx="32.500" cy="16.200" r="1.700" fill="#85868c"/>
<path d="M35 15.500q3.500-2 7 0l.6 12h-8z" fill="#5ba3ea"/><path d="M35.300 27.500h5.600l-.2 10.500h-5z" fill="#c4c3bf"/><ellipse cx="36.800" cy="12.600" rx="1.900" ry="2.300" fill="#6d7078"/>
<path d="M41.600 18.500q3-1.500 5.800 0l.6 7h-6.800z" fill="#62a6ea"/><path d="M41.800 25h6l.2 5h-6.200z" fill="#4a5470"/><path d="M42 30h5.600l.4 9h-5.800z" fill="#505259"/><ellipse cx="44.200" cy="15.600" rx="2.100" ry="2.200" fill="#585a62"/><ellipse cx="44.300" cy="16.400" rx="1.100" ry="1" fill="#d9a08c"/>
<path d="M24 38.500h26v1.600H24z" fill="#b9bab6" opacity=".8"/><rect width="72" height="47" fill="#f8f8f8" opacity="0"/></g></svg>
<svg class="ic th" style="left:518px;top:271px" width="72" height="47" viewBox="0 0 72 47"><defs><clipPath id="c2"><rect width="72" height="47" rx="3.5"/></clipPath></defs><g clip-path="url(#c2)"><rect width="72" height="47" fill="#a9bfd9"/><rect width="72" height="11" fill="#a6bdd7"/>
<path d="M0 0h6l1 3 2-3h5l1 4 1-4h2l1 10-5 1H0z" fill="#7e8fa6"/><path d="M15 0h3l.5 11-3.500-1z" fill="#8798ae"/><circle cx="18.300" cy="2.600" r=".8" fill="#e9e6a8"/>
<path d="M27 13l2-6 2-2 2 3 1-4 2-4h36v19l-14-.5-12-1.500-10-2-6-2z" fill="#8295ac"/><path d="M48 0h24v17l-10 1-8-4z" fill="#7b8da5"/><path d="M28 9l2-4 2 1 1 8-5-1z" fill="#93a5ba"/>
<path d="M0 10.500q4-2 8-.5q10 4 20 6l14 2 30 1v16H0z" fill="#a7bcd8"/><path d="M0 20q20 2 36 1l36 1v12H0z" fill="#aec1db"/>
<path d="M0 27l8-1 10 1.500 12-1 14 1 14-1 14 1v8H0z" fill="#bccae0"/>
<path d="M0 34l8-1 12 1 14-1 14 1 24-1v14H0z" fill="#f1f3f7"/><path d="M1 36h2v1H1zM5 38h1.500v1H5zM9 36.500h2v1H9zM3 41h2v1H3zM11 40h1.500v1h-1.500zM7 43.500h3v1H7zM14 42h1.500v1H14zM62 38h7v.8h-7z" fill="#8d9ab5"/>
<path d="M17 43.500l8-.8 30 .3 17 1v3H17z" fill="#b6c0da"/>
<path d="M33.500 15q3.500-3 6.500 0l1.500 4.500q5 2.500 6.500 8l-2 2.500 1.500 6-3 6.500h-9l-4-5 1.500-8.500 3-5.500z" fill="#9094b6"/><path d="M36 24l6 1 2 8-5 2-4-3z" fill="#8387ab"/>
<ellipse cx="36.800" cy="15.200" rx="3.300" ry="2.900" fill="#6e5866"/><path d="M33.300 16.300h6.600l.2 2h-6.600z" fill="#dfe0ee"/><path d="M34 18.600h3.600l-.6 2.800h-2.400z" fill="#c9a49a"/>
<path d="M42 20l5.500 5.500 1.200 3.500-2.200.8-5.500-6z" fill="#56586a"/><path d="M30.500 33h4.500v6h-4.500zM42 33.500h4v5.500h-4z" fill="#5b5d72"/>
<path d="M34 41h5l-.5 2.200h-4.800zM44.500 39h4.300l.4 3h-5zM53 41.300l4-1.300.6 2.400H53z" fill="#e2808c"/><rect width="72" height="47" fill="#f8f8f8" opacity="0"/></g></svg>
<svg class="ic th" style="left:518px;top:335px" width="72" height="47" viewBox="0 0 72 47"><defs><clipPath id="c3"><rect width="72" height="47" rx="3.5"/></clipPath></defs><g clip-path="url(#c3)"><rect width="72" height="47" fill="#c7d4ea"/><rect y="0" width="72" height="8" fill="#c1cfe8"/><ellipse cx="40" cy="3" rx="6" ry="1.6" fill="#dbe3f1"/>
<path d="M0 14l6-3 5 2 6-3 6 3 7-3 6 2 7-3 6 3 6-2 6 2 5-2 6 3v10H0z" fill="#dde3ef"/><path d="M0 16l8-1 9 2 10-2 12 2 12-2 21 2v6H0z" fill="#cfd7e8"/>
<rect y="22" width="72" height="25" fill="#e7e6ec"/><rect y="40" width="72" height="7" fill="#dddde6"/>
<path d="M44 30c0-10 5-17 13-17s12 6 13 17z" fill="none" stroke="#d17b70" stroke-width="2.2"/><path d="M50 16l8 14M58 13v17M65 16l-6 14M46 24h24" stroke="#d88c82" stroke-width="1.2"/><path d="M60 14l10 2 1 14h-9z" fill="#cf766b" opacity=".85"/>
<path d="M2 36q10-3 22-4l6-5h26l4 5h6l-3 8q-30 3-58 0z" fill="#f6f6f8"/><path d="M16 33l7-7h14v7z" fill="#6f747c"/><path d="M25 27h5v6h-6z" fill="#c9ccd2"/><path d="M40 27h8v6h-8z" fill="#8d9198"/><path d="M50 27h6v6h-6z" fill="#d8d9dd"/><path d="M2 38q30 3 60 0l-1 3q-29 3-57 0z" fill="#c4c5cc"/><rect width="72" height="47" fill="#f8f8f8" opacity="0.1"/></g></svg>
<svg class="ic th" style="left:518px;top:399px" width="72" height="47" viewBox="0 0 72 47"><defs><clipPath id="c4"><rect width="72" height="47" rx="3.5"/></clipPath></defs><g clip-path="url(#c4)"><rect width="72" height="47" fill="#aeb0b8"/><path d="M4 0h68v8l-20-1.500-16-3-28-1z" fill="#e0e4e7"/><path d="M4 0h32l-8 2.200-22 .8z" fill="#adb9c8"/>
<path d="M12 3l22 1 16 3.500 22 1v9l-24 4-14-6-18-6z" fill="#abb1bb"/><path d="M30 6l18 2 6 6-10 6-10-6z" fill="#b3b5bb"/>
<path d="M37 19l13-7 22-2v37H44z" fill="#ab8880"/><path d="M46 25l14-7 12 2v27H52z" fill="#a5786c"/><path d="M52 22l10-3 10 3v10l-12-2z" fill="#b07263"/><path d="M54 34l10-2 8 2v13H56z" fill="#9f7169"/><path d="M60 12l12-3v9l-8-1z" fill="#9f9497"/>
<path d="M0 2l6-2 6 4 8 4 10 2 4 8 4 10 6 8 6 11H0z" fill="#d5b096"/><path d="M10 10l12 0 3 8-7 6-10-2z" fill="#bb8a70"/><path d="M2 13l6-1 2 12-6 4-4-2z" fill="#dcc1aa"/><path d="M14 24l14-2 6 8-10 6-10-4z" fill="#b57e64"/><path d="M24 36l12-2 8 13H26z" fill="#bd8a70"/><path d="M0 32l12 2 10 6 4 7H0z" fill="#d8b9a2"/><path d="M20 14l8-2 4 8-8 2z" fill="#d9bba4"/>
<path d="M0 3l6-3 7 4-2 8-11 3z" fill="#9f9f86"/>
<path d="M41 20q-3 5-1 10t4 9l4 8h-5l-3-8q-3-6-2-10t2-9z" fill="#90a4b6"/><rect width="72" height="47" fill="#f8f8f8" opacity="0"/></g></svg>
<svg class="ic th" style="left:518px;top:465px" width="72" height="47" viewBox="0 0 72 47"><defs><clipPath id="c5"><rect width="72" height="47" rx="3.5"/></clipPath></defs><g clip-path="url(#c5)"><rect width="72" height="47" fill="#c4b19c"/><path d="M0 0h72v5H0z" fill="#b09a85"/>
<path d="M0 4h22v30H0z" fill="#c9b5a0"/><path d="M3 5v28M7 5v28M11 5v28M15 5v28M19 5v28" stroke="#b49f8a" stroke-width="1"/>
<path d="M22 3h28v30H22z" fill="#d8cbb2"/><path d="M24 4h24l-2 12-8 6-10-4z" fill="#b9cda6"/><path d="M28 18h12v14H28z" fill="#a9bf9a"/><path d="M26 22l3-2 2 2v8h-5z" fill="#8e958a"/>
<path d="M50 2h22v32H50z" fill="#c6b19c"/><path d="M54 3v30M58 3v30M62 3v30M67 3v30" stroke="#ae9883" stroke-width="1.1"/><path d="M39 0h3.4v36H39z" fill="#9c7f68"/><path d="M60 0h4v30h-4z" fill="#a98d78"/>
<path d="M0 32h72v6H0z" fill="#a9ada0"/><path d="M0 33l14-3 10 3 12-2 10 3 12-3 14 3v5H0z" fill="#b8b8aa"/><path d="M52 28l12-5 8 3v10H54z" fill="#aeb1a6"/>
<path d="M0 38q36-3 72 0v9H0z" fill="#b7d1c4"/><path d="M8 41q28-2 56 0v6H8z" fill="#c3dccf"/><rect width="72" height="47" fill="#f8f8f8" opacity="0.1"/></g></svg>
<svg class="ic th" style="left:518px;top:531px" width="72" height="47" viewBox="0 0 72 47"><defs><clipPath id="c6"><rect width="72" height="47" rx="3.5"/></clipPath></defs><g clip-path="url(#c6)"><rect width="72" height="47" fill="#d4d1cd"/><rect width="6" height="47" fill="#b8d3db"/><rect x="66" width="6" height="47" fill="#b8d3db"/>
<path d="M12 40l26 5 24-14 1 3-25 12-26-4z" fill="#c4c1bd"/>
<path d="M8 21q0-3 4-4l14-8q2-4 7-4l7 1q4-2 8 0l4 3q6 0 8 4l3 4q2 3-1 5l-20 14q-4 3-8 2l-22-9q-4-2-4-5z" fill="#cf9f66"/>
<path d="M13 21l16-10 12-3 14 5 5 6-22 14q-3 2-6 1z" fill="#dcb27a"/><path d="M20 20l12-7 12 0 8 5-16 10q-3 1-5 0z" fill="#e3bf8c"/>
<path d="M8 22l26 11q4 1 8-2l21-14v7q0 3-3 5L40 42q-4 2-8 1L12 35q-4-2-4-6z" fill="#b9835a"/><path d="M12 27v6M16 29v6M20 31v6M24 32v7M28 34v7M32 35v7M37 35v7M42 32v7M47 29v7M52 26v6M57 22v6" stroke="#a87350" stroke-width="1.100"/>
<path d="M30 18l8-4 8 4-8 5z" fill="#f5e7b4"/><path d="M30 18l8 5v2.200l-8-5zM38 23l8-5v2.200l-8 5z" fill="#e6cf8b"/><rect width="72" height="47" fill="#f8f8f8" opacity="0.06"/></g></svg>
<svg class="ic th" style="left:518px;top:595px" width="72" height="47" viewBox="0 0 72 47"><defs><clipPath id="c7"><rect width="72" height="47" rx="3.5"/></clipPath></defs><g clip-path="url(#c7)"><rect width="72" height="47" fill="#a9c4a4"/><path d="M46 0h26v20l-8 6-10-6z" fill="#bdd4bb"/><path d="M54 22l18-4v29H50z" fill="#97b893"/><path d="M0 26l12-2 6 8-4 15H0z" fill="#9dbb9a"/><path d="M60 4l6 2-2 6-6-2zM64 30l6 3-3 5-5-3zM4 34l5 2-2 5-5-2z" fill="#e4ece2"/>
<path d="M64 0l4 0-5 22-11 25h-4l9-26z" fill="#8c8064"/><path d="M0 4l3-2 12 16 12 14-4 3-12-14z" fill="#8a7d62"/>
<path d="M2 0h20l4 10 2 10-8 4-10-8z" fill="#a49073"/><path d="M28 0h20l2 10-4 8-12-2-4-8z" fill="#a89579"/>
<path d="M14 20l12-6 20 0 10 8 6 14-4 11H12l-4-12z" fill="#ac9a7d"/><path d="M22 30l14-4 12 6 2 15H20z" fill="#b8a88c"/><path d="M10 8l8-2 4 10-6 4z" fill="#958266"/><path d="M30 4l12-1 2 8-10 3z" fill="#998669"/>
<ellipse cx="41" cy="22" rx="7.500" ry="6.500" fill="#c7b89c"/><path d="M35.500 19.500l5 1.500-1 2.500-4.500-1.500zM43 21l5-1.500 .8 2.300-5 1.500z" fill="#6e5f50"/><ellipse cx="41.800" cy="19.200" rx="2.200" ry="1.600" fill="#5f5246"/>
<ellipse cx="25" cy="29" rx="5.500" ry="3.300" fill="#9fcfc0" transform="rotate(-25 25 29)"/><ellipse cx="38" cy="33" rx="5" ry="3.200" fill="#8fc4b3" transform="rotate(25 38 33)"/><ellipse cx="23" cy="3" rx="4" ry="2.200" fill="#a8d3c4" transform="rotate(15 23 3)"/><ellipse cx="58" cy="14" rx="4.500" ry="2.300" fill="#8ebf9f" transform="rotate(40 58 14)"/><ellipse cx="8" cy="28" rx="4" ry="2" fill="#93c0a6" transform="rotate(-30 8 28)"/><rect width="72" height="47" fill="#f8f8f8" opacity="0.05"/></g></svg>
<svg class="ic th" style="left:518px;top:723px" width="72" height="47" viewBox="0 0 72 47"><defs><clipPath id="c9"><rect width="72" height="47" rx="3.5"/></clipPath></defs><g clip-path="url(#c9)"><rect width="72" height="47" fill="#e6eeee"/><rect width="72" height="8" fill="#eef3f4"/>
<circle cx="28" cy="19" r="10" fill="#fbf3c4" opacity=".8"/><circle cx="28" cy="19.500" r="5" fill="#fff8d8"/><ellipse cx="28" cy="21" rx="17" ry="3.600" fill="#f3e29a" opacity=".75"/>
<path d="M54 12l8-6 6-3 4 1v20H52z" fill="#7f9a8c"/><path d="M50 22l6-12 8-6 8 8v12H50z" fill="#75887c"/>
<rect y="24" width="72" height="23" fill="#6fc2ba"/><path d="M0 24h72v4H0z" fill="#97d0c8"/><path d="M0 34h72v13H0z" fill="#63bab3"/><path d="M14 26h28v8H14z" fill="#d9e6c0" opacity=".55"/><path d="M8 30h3v1H8zM16 33h4v1h-4zM22 29h3v1h-3zM30 34h4v1h-4zM12 38h4v1h-4zM24 40h3v1h-3zM52 34h4v1h-4zM60 38h4v1h-4zM56 43h4v1h-4zM6 44h4v1H6z" fill="#d5efea"/>
<path d="M0 16l4-3 5-2 6 5 1 5H0zM15 18l4-3.500 5 3.500v3.500h-9zM38 17l6-6 6 6v5H38z" fill="#6e7c6e"/><path d="M1 21h13v4H1zM16 21.500h7v3.500h-7zM39 22h10v4H39zM53 22h17v6H53z" fill="#5f6e68"/><path d="M3 25v5M8 25v5M12 25v4M18 25v4M41 26v5M47 26v5M56 28v6M62 28v7M68 28v6" stroke="#6a7a76" stroke-width="1.100"/>
<path d="M42 24l6 0 8 23H42z" fill="#9a9c8e"/><path d="M44.500 25l3 22M47 25l5 22" stroke="#7d7f72" stroke-width=".9"/><path d="M42 30v10M42.500 38v9M56 32v8M58 38v9" stroke="#6c746c" stroke-width="1.500"/>
<path d="M0 40l20-5 16-2 .5 1.500-16 2.500L0 42.500z" fill="#a3907c"/><rect width="72" height="47" fill="#f8f8f8" opacity="0.04"/></g></svg>
<svg class="ic th" style="left:518px;top:787px" width="72" height="47" viewBox="0 0 72 47"><defs><clipPath id="c10"><rect width="72" height="47" rx="3.5"/></clipPath></defs><g clip-path="url(#c10)"><rect width="72" height="47" fill="#7a9cc0"/><rect width="72" height="17" fill="#b4cae8"/><rect width="72" height="8" fill="#a8c2e5"/><path d="M0 9q18-2 36 0t36-1v4H0z" fill="#bccfea"/><path d="M0 14h72v3H0z" fill="#c6d6ec"/>
<path d="M44 16.500l28-1v2H44z" fill="#7e93ad"/><rect y="17" width="72" height="9" fill="#6089af"/><path d="M0 17h72v2.500H0z" fill="#6e93b8"/>
<path d="M0 23q8-1.500 14-1.500t10-1.500l5-.5 3 1.500q-6 1-8 3t-10 2.500l-14 1z" fill="#f3f6fa"/><path d="M24 20.500q4-1.500 8-1l1 2q-5-.5-8 1.500z" fill="#d3e0ee"/>
<rect y="26" width="72" height="21" fill="#7b9dc1"/><path d="M0 30h72v3H0zM0 38h72v3H0zM0 44h72v3H0z" fill="#7194b9" opacity=".8"/><path d="M4 28h8M18 31h10M40 29h9M8 36h12M36 35h14M50 42h10M2 41h8M26 44h10M58 33h8M62 46h6" stroke="#9bb6d3" stroke-width=".8"/><circle cx="27.500" cy="32.500" r=".8" fill="#e5a08c"/><rect width="72" height="47" fill="#f8f8f8" opacity="0"/></g></svg>
<svg class="ic" style="left:530px;top:660.300px" width="48" height="48" viewBox="0 0 24 24"><path fill="#8e8e8e" d="M16 1H4c-1.100 0-2 .9-2 2v14h2V3h12V1zm-1 4l6 6v10c0 1.100-.9 2-2 2H7.990C6.890 23 6 22.100 6 21l.010-14c0-1.100.890-2 1.990-2h7zm-1 7h5.500L14 6.500V12z"/></svg>
</main>
</section>
<div class="dlg" role="dialog">
<div class="dshadow"></div><div class="dbody"></div><div class="dtitle"></div>
<span class="t" style="left:723.68px;top:296.50px;font-size:14px;color:#2f3345;font-weight:700;transform:scaleX(0.9152);">Available Workflow Actions</span>
<div class="dclose"><svg width="17" height="18" viewBox="0 0 17 18"><path d="M4.6 5.1l7.8 7.8M12.400 5.100l-7.800 7.800" stroke="#fff" stroke-width="1.3"/></svg></div>
<div class="fs" style="left:752px;top:349px;width:510px;height:70px"></div>
<div class="fs" style="left:752px;top:431px;width:510px;height:549px"></div>
<div class="btn foc" style="left:790px;top:365px"></div>
<span class="t" style="left:812.97px;top:374.50px;font-size:14.5px;color:#4c5bd8;transform:scaleX(0.8941);">Add To Bundle</span>
<div class="btn" style="left:956px;top:365px"></div>
<span class="t" style="left:1000.26px;top:374.50px;font-size:14.5px;color:#4c5bd8;transform:scaleX(0.9254);">Unlock</span>
<div class="btn" style="left:1123px;top:365px"></div>
<span class="t" style="left:1165.26px;top:374.50px;font-size:14.5px;color:#4c5bd8;transform:scaleX(0.8779);">Refresh</span>
<div class="grp"></div>
<span class="t" style="left:772.97px;top:447.50px;font-size:14px;color:#3b3b3b;font-weight:700;transform:scaleX(0.8882);">Blogs</span>
<span class="t" style="left:769.28px;top:495.80px;font-size:14px;color:#3e3e3e;transform:scaleX(0.9047);">AI Translate</span>
<div class="btn" style="left:1123px;top:486px"></div>
<span class="t" style="left:1150.25px;top:495.80px;font-size:14px;color:#4c5bd8;transform:scaleX(1.0231);">3 content(s)</span>
<span class="t" style="left:768.24px;top:550.80px;font-size:14px;color:#3e3e3e;transform:scaleX(0.9822);">Unpublish</span>
<div class="btn" style="left:1123px;top:541px"></div>
<span class="t" style="left:1150.25px;top:550.80px;font-size:14px;color:#4c5bd8;transform:scaleX(1.0231);">3 content(s)</span>
<span class="t" style="left:768.64px;top:605.80px;font-size:14px;color:#3e3e3e;transform:scaleX(0.9288);">Copy Blog</span>
<div class="btn" style="left:1123px;top:596px"></div>
<span class="t" style="left:1150.25px;top:605.80px;font-size:14px;color:#4c5bd8;transform:scaleX(1.0231);">3 content(s)</span>
<span class="t" style="left:769.27px;top:660.80px;font-size:14px;color:#3e3e3e;transform:scaleX(0.9260);">Add Image</span>
<div class="btn" style="left:1123px;top:651px"></div>
<span class="t" style="left:1150.25px;top:660.80px;font-size:14px;color:#4c5bd8;transform:scaleX(1.0231);">3 content(s)</span>
<span class="t" style="left:769.27px;top:715.80px;font-size:14px;color:#3e3e3e;transform:scaleX(0.9249);">AddTags</span>
<div class="btn" style="left:1123px;top:706px"></div>
<span class="t" style="left:1150.25px;top:715.80px;font-size:14px;color:#4c5bd8;transform:scaleX(1.0231);">3 content(s)</span>
<span class="t" style="left:769.28px;top:770.80px;font-size:14px;color:#3e3e3e;transform:scaleX(0.8795);">AddSEO</span>
<div class="btn" style="left:1123px;top:761px"></div>
<span class="t" style="left:1150.25px;top:770.80px;font-size:14px;color:#4c5bd8;transform:scaleX(1.0231);">3 content(s)</span>
<span class="t" style="left:768.71px;top:825.80px;font-size:14px;color:#3e3e3e;transform:scaleX(0.9225);">Save and Publish</span>
<div class="btn" style="left:1123px;top:816px"></div>
<span class="t" style="left:1150.25px;top:825.80px;font-size:14px;color:#4c5bd8;transform:scaleX(1.0231);">3 content(s)</span>
<span class="t" style="left:768.23px;top:880.80px;font-size:14px;color:#3e3e3e;transform:scaleX(0.9301);">Reset Workflow</span>
<div class="btn" style="left:1123px;top:871px"></div>
<span class="t" style="left:1150.25px;top:880.80px;font-size:14px;color:#4c5bd8;transform:scaleX(1.0231);">3 content(s)</span>
<span class="t" style="left:769.27px;top:935.80px;font-size:14px;color:#3e3e3e;transform:scaleX(0.9362);">Archive</span>
<div class="btn" style="left:1123px;top:926px"></div>
<span class="t" style="left:1150.25px;top:935.80px;font-size:14px;color:#4c5bd8;transform:scaleX(1.0231);">3 content(s)</span>
</div>
<div class="redge"></div>
</body></html>
